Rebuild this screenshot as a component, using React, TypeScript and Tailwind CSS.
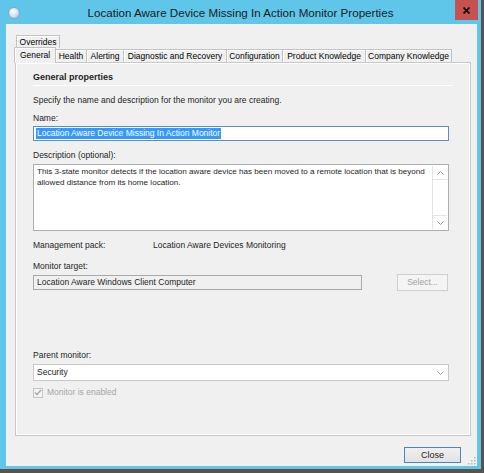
const FONT = "font-['Liberation_Sans',Arial,sans-serif]";

const tabs = [
  { label: "General", w: "w-[42px]", active: true },
  { label: "Health", w: "w-[31px]" },
  { label: "Alerting", w: "w-[37px]" },
  { label: "Diagnostic and Recovery", w: "w-[103px]" },
  { label: "Configuration", w: "w-[56px]" },
  { label: "Product Knowledge", w: "w-[83px]" },
  { label: "Company Knowledge", w: "w-[86px]" },
];

function Chevron({ up }: { up?: boolean }) {
  return (
    <svg width="7" height="4" viewBox="0 0 7 4" aria-hidden="true">
      <path
        d={up ? "M0.5 3.5 L3.5 0.5 L6.5 3.5" : "M0.5 0.5 L3.5 3.5 L6.5 0.5"}
        fill="none"
        stroke="#9a9a9a"
        strokeWidth="1"
      />
    </svg>
  );
}

function TitleBar() {
  return (
    <div className="h-[24px] relative flex items-center shrink-0">
      <div className="absolute left-[8px] top-[7px] w-[12px] h-[12px] rounded-full border border-[#8da3b8] bg-[radial-gradient(circle_at_40%_35%,#ffffff,#c9dcef_60%,#9fbad6)]" />
      <div className="flex-1 text-center text-[11.6px] leading-none text-[#1b1b1b] pt-[1px]">
        Location Aware Device Missing In Action Monitor Properties
      </div>
      <div className="absolute right-[3px] top-0 w-[23px] h-[20px] bg-[#c75050] flex items-center justify-center">
        <svg width="7" height="7" viewBox="0 0 7 7" aria-hidden="true">
          <path d="M0.5 0.5 L6.5 6.5 M6.5 0.5 L0.5 6.5" stroke="#111" strokeWidth="1.8" />
        </svg>
      </div>
    </div>
  );
}

function Tabs() {
  return (
    <div className="pt-[11px]">
      <div className="ml-[10px] w-[44px] h-[13px] border border-b-0 border-[#c3c3c3] shadow-[inset_1px_1px_0_#fff] flex items-center justify-center text-[8.5px] leading-none">
        Overrides
      </div>
      <div className="ml-[8px] -mt-[1px] h-[15px] flex items-start">
        {tabs.map((t) =>
          t.active ? (
            <div
              key={t.label}
              className={`${t.w} h-[16px] relative z-10 bg-[#f0f0f0] border border-b-0 border-[#c3c3c3] shadow-[inset_1px_1px_0_#fff] flex items-center justify-center text-[8.5px] leading-none pb-[1px]`}
            >
              {t.label}
            </div>
          ) : (
            <div
              key={t.label}
              className={`${t.w} h-[13px] mt-[2px] border-t border-r border-[#c3c3c3] shadow-[inset_1px_1px_0_#fff] flex items-center justify-center text-[8.5px] leading-none`}
            >
              {t.label}
            </div>
          )
        )}
      </div>
    </div>
  );
}

function GeneralPanel() {
  return (
    <div className="ml-[9px] w-[456px] h-[374px] border border-[#c8c8c8] shadow-[inset_1px_1px_0_#fff,inset_-1px_-1px_0_#fff] flex flex-col pl-[17px] text-[8.5px] leading-[11px] text-[#1e1e1e]">
      <div className="mt-[9px] h-[11px] font-bold text-[9px]">General properties</div>
      <div className="mt-[2px] h-px w-[420px] bg-white" />

      <div className="mt-[9px] h-[11px]">Specify the name and description for the monitor you are creating.</div>

      <div className="mt-[7px] h-[11px]">Name:</div>
      <div className="mt-[2px] w-[416px] h-[15px] border border-[#5b8fc2] bg-white flex items-center pl-[2px]">
        <span className="bg-[#3399ff] text-white leading-[11px] px-px">Location Aware Device Missing In Action Monitor</span>
      </div>

      <div className="mt-[9px] h-[11px]">Description (optional):</div>
      <div className="mt-[3px] w-[416px] h-[67px] border border-[#abadb3] bg-white flex">
        <div className="flex-1 pl-[3px] pt-[2px] leading-[10.5px] text-[8.1px] whitespace-nowrap overflow-hidden">
          This 3-state monitor detects if the location aware device has been moved to a remote location that is beyond
          <br />
          allowed distance from its home location.
        </div>
        <div className="w-[15px] m-px border-l border-[#e3e3e3] bg-white flex flex-col justify-between">
          <div className="h-[14px] border-b border-[#e3e3e3] flex items-center justify-center">
            <Chevron up />
          </div>
          <div className="h-[14px] border-t border-[#e3e3e3] flex items-center justify-center">
            <Chevron />
          </div>
        </div>
      </div>

      <div className="mt-[9px] h-[11px] flex">
        <span className="w-[120px]">Management pack:</span>
        <span>Location Aware Devices Monitoring</span>
      </div>

      <div className="mt-[10px] h-[11px]">Monitor target:</div>
      <div className="mt-[2px] h-[17px] flex items-center">
        <div className="w-[329px] h-[15px] border border-[#a9a9a9] bg-[#f0f0f0] flex items-center pl-[3px]">
          Location Aware Windows Client Computer
        </div>
        <div className="ml-[35px] w-[51px] h-[17px] border border-[#cfcfcf] bg-[#f4f4f4] flex items-center justify-center text-[#a3a3a3]">
          Select...
        </div>
      </div>

      <div className="mt-[59px] h-[11px]">Parent monitor:</div>
      <div className="mt-[3px] w-[416px] h-[17px] border border-[#c9c9c9] bg-white flex items-center pl-[3px] pr-[4px]">
        <span className="flex-1">Security</span>
        <Chevron />
      </div>

      <div className="mt-[6px] h-[11px] flex items-center gap-[4px] text-[#a6a6a6]">
        <div className="w-[10px] h-[10px] border border-[#c5c5c5] bg-[#f4f4f4] flex items-center justify-center">
          <svg width="8" height="7" viewBox="0 0 8 7" aria-hidden="true">
            <path d="M1 3.5 L3 5.5 L7 1" fill="none" stroke="#a8a8a8" strokeWidth="1.4" />
          </svg>
        </div>
        <span>Monitor is enabled</span>
      </div>
    </div>
  );
}

export default function App() {
  return (
    <div className={`w-[484px] h-[473px] bg-[#5a534d] ${FONT}`}>
      <div className="w-[481px] h-[469px] bg-[#5fc6ea] flex flex-col">
        <TitleBar />
        <div className="ml-[6px] mr-[4px] mb-[3px] flex-1 bg-[#f0f0f0] relative flex flex-col">
          <Tabs />
          <GeneralPanel />
          <div className="mt-[11px] flex justify-end pr-[16px]">
            <div className="w-[57px] h-[16px] border border-[#4a86b8] bg-[linear-gradient(#f0f0f0,#e2e2e2)] flex items-center justify-center text-[9px] leading-none text-[#1e1e1e]">
              Close
            </div>
          </div>
          <svg className="absolute right-[1px] bottom-[1px]" width="8" height="8" viewBox="0 0 8 8" aria-hidden="true">
            {[
              [6, 0],
              [6, 3],
              [3, 3],
              [6, 6],
              [3, 6],
              [0, 6],
            ].map(([x, y], i) => (
              <rect key={i} x={x} y={y} width="1.5" height="1.5" fill="#b8b8b8" />
            ))}
          </svg>
        </div>
      </div>
    </div>
  );
}
